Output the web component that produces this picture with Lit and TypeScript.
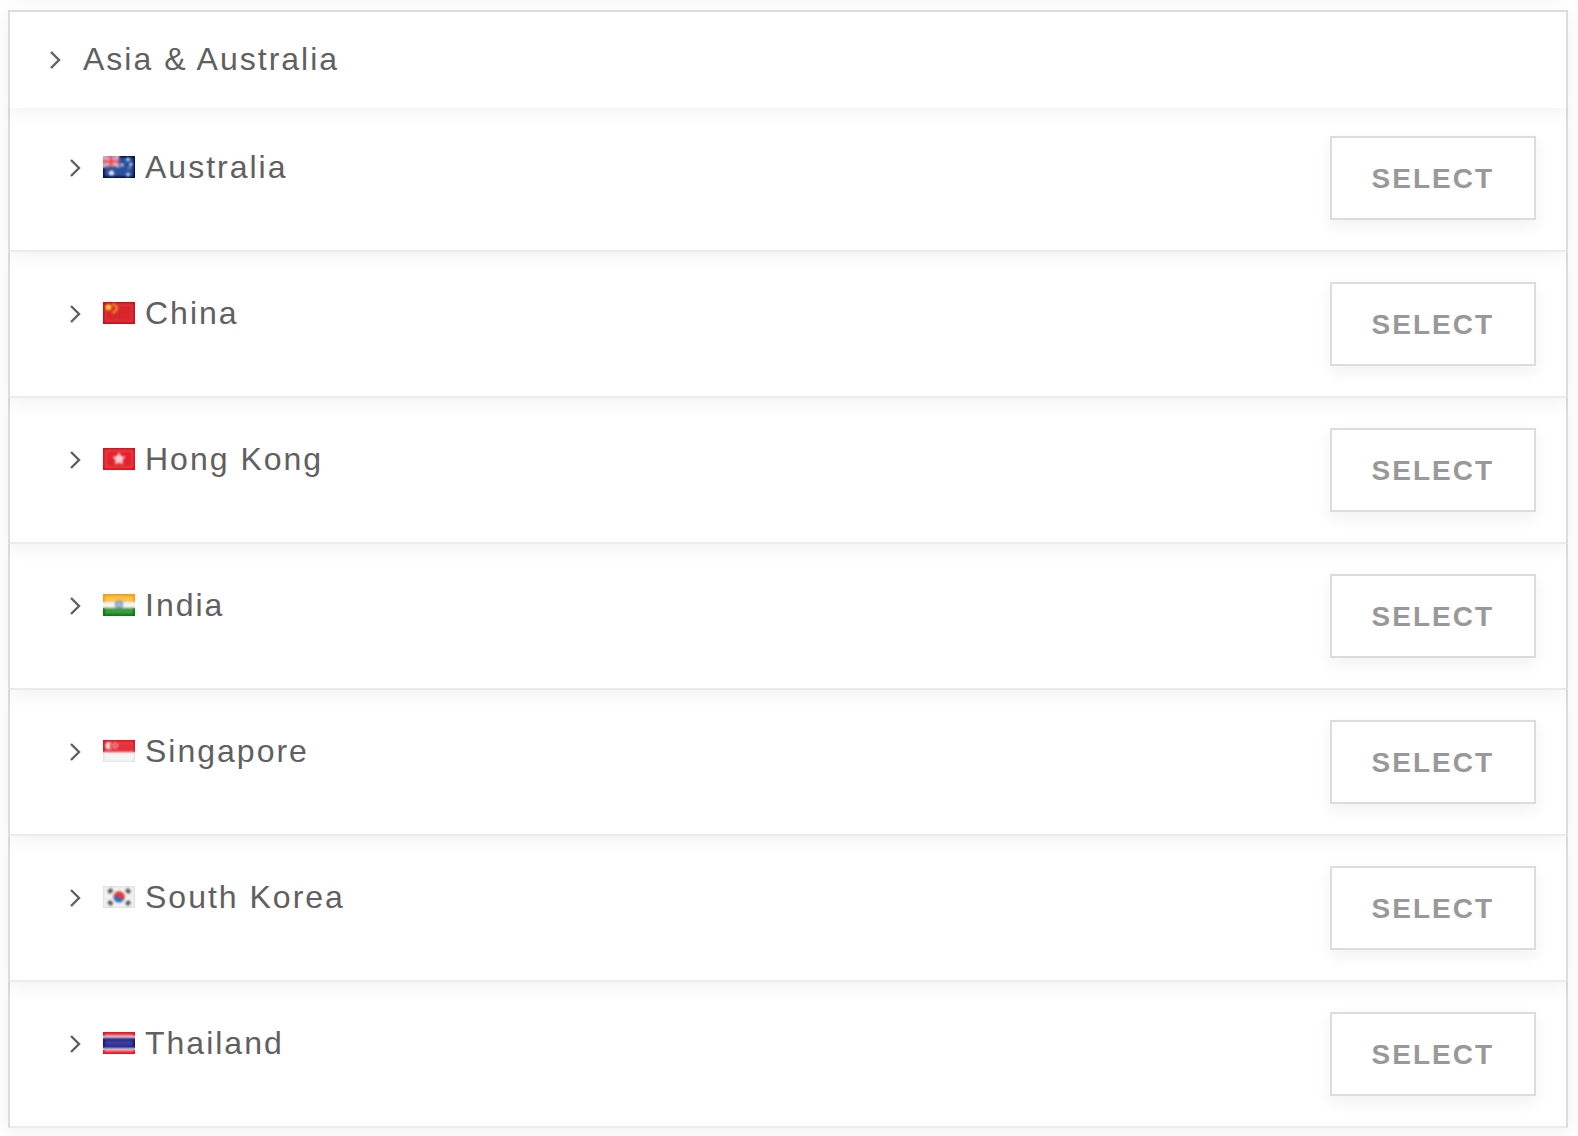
import { LitElement, html, svg, css, type SVGTemplateResult } from "lit";
import { customElement, state } from "lit/decorators.js";
import { styleMap } from "lit/directives/style-map.js";

interface Country {
  name: string;
  flag: SVGTemplateResult;
}

/* Flags are drawn on a 32 x 22 grid. */
const star = (x: number, y: number, r: number, fill: string) => {
  const points = Array.from({ length: 10 }, (_, i) => {
    const a = (Math.PI / 5) * i - Math.PI / 2;
    const d = i % 2 ? r * 0.45 : r;
    return `${(x + d * Math.cos(a)).toFixed(2)},${(y + d * Math.sin(a)).toFixed(2)}`;
  }).join(" ");
  return svg`<polygon points=${points} fill=${fill} />`;
};

const australia = svg`
  <rect width="32" height="22" fill="#03104f" />
  <rect x="2" y="2" width="28" height="18" fill="#3a60a8" />
  <rect x="3" y="3" width="26" height="16" fill="#2a4f9c" />
  <rect width="16" height="11" fill="#6d76b8" />
  <path d="M0 0L16 11M16 0L0 11" stroke="#e9a9b6" stroke-width="3" />
  <path d="M8 0V11M0 5.5H16" stroke="#f6bfc6" stroke-width="4.5" />
  <path d="M8 0V11M0 5.5H16" stroke="#e54852" stroke-width="2.6" />
  <circle cx="8.5" cy="17" r="2.6" fill="#e4edfb" />
  <circle cx="25" cy="3.4" r="1.8" fill="#cfdcf5" />
  <circle cx="19" cy="9" r="1.8" fill="#b9cbed" />
  <circle cx="28" cy="8.5" r="1.7" fill="#c6d5f1" />
  <circle cx="25" cy="18.6" r="1.9" fill="#cfdcf5" />
  <circle cx="26" cy="12" r="1" fill="#9db4e0" />`;

const china = svg`
  <rect width="32" height="22" fill="#c40d14" />
  <rect x="2" y="2" width="28" height="18" fill="#e3555a" />
  <rect x="3" y="3" width="26" height="16" fill="#d8242b" />
  ${star(5.5, 5.4, 4.2, "#ffd92e")}
  <circle cx="5.5" cy="5.4" r="2.4" fill="#ffd92e" />
  <circle cx="11" cy="2.5" r="1.6" fill="#eb9a2d" />
  <circle cx="13.6" cy="5" r="1.6" fill="#eb9a2d" />
  <circle cx="13.2" cy="8" r="1.6" fill="#eb9a2d" />
  <circle cx="10.8" cy="10" r="1.6" fill="#eb9a2d" />`;

const hongKong = svg`
  <rect width="32" height="22" fill="#dc0c17" />
  <rect x="2" y="2" width="28" height="18" fill="#f0626a" />
  <rect x="3" y="3" width="26" height="16" fill="#e3222c" />
  ${star(16, 11, 7, "#fbdcde")}
  <circle cx="16" cy="11" r="3.8" fill="#fbdcde" />
  <circle cx="16" cy="11.4" r="1" fill="#ec7d83" />`;

const india = svg`
  <rect width="32" height="22" fill="#f4f4f4" />
  <rect width="32" height="8" fill="#f59b12" />
  <rect x="2" y="2" width="28" height="6" fill="#fbc44c" />
  <rect y="14" width="32" height="8" fill="#0c7613" />
  <rect x="2" y="14" width="28" height="6" fill="#3f9a3f" />
  <circle cx="16" cy="10.6" r="3.4" fill="#a8b6d2" stroke="#7f94c0" stroke-width="1.4" />`;

const singapore = svg`
  <rect width="32" height="22" fill="#dedede" />
  <rect x="1" y="11" width="30" height="10" fill="#f5f5f5" />
  <rect width="32" height="12" fill="#dc1620" />
  <rect x="2" y="2" width="28" height="10" fill="#ee5860" />
  <rect x="3" y="3" width="26" height="9" fill="#e3303a" />
  <path d="M7.5 2.8A3.3 3.3 0 1 0 7.5 8.8A4.4 4.4 0 0 1 7.5 2.8Z" fill="#fff" stroke="#f9d5d7" />
  <circle cx="12" cy="3" r="1" fill="#fbd0d3" />
  <circle cx="9.8" cy="5" r="1" fill="#fbd0d3" />
  <circle cx="14.2" cy="5" r="1" fill="#fbd0d3" />
  <circle cx="10.6" cy="7.4" r="1" fill="#fbd0d3" />
  <circle cx="13.4" cy="7.4" r="1" fill="#fbd0d3" />`;

const southKorea = svg`
  <rect width="32" height="22" fill="#dcdcdc" />
  <rect x="1" y="1" width="30" height="20" fill="#f3f3f3" />
  <circle cx="16" cy="11" r="5.6" fill="#2c6fd0" />
  <path d="M10.8 9A5.6 5.6 0 0 1 21.4 12.6C19.6 14 17.6 13.2 16 11.2C14.4 9.4 12 10.2 10.8 12.4Z" fill="#e83a37" />
  <path d="M5.6 6.6L9 3.4M23.4 3.4L26.8 6.6M5.6 15.4L9 18.6M23.4 18.6L26.8 15.4" stroke="#4e4e4e" stroke-width="4" />`;

const thailand = svg`
  <rect width="32" height="22" fill="#e8141f" />
  <rect x="2" y="2" width="28" height="18" fill="#f2646c" />
  <rect y="4" width="32" height="14" fill="#e9e9f2" />
  <rect y="6" width="32" height="10" fill="#16167a" />
  <rect x="2" y="8" width="28" height="6" fill="#3b3c9c" />`;

const COUNTRIES: Country[] = [
  { name: "Australia", flag: australia },
  { name: "China", flag: china },
  { name: "Hong Kong", flag: hongKong },
  { name: "India", flag: india },
  { name: "Singapore", flag: singapore },
  { name: "South Korea", flag: southKorea },
  { name: "Thailand", flag: thailand },
];

const chevron = html`<svg class="chevron" viewBox="0 0 13 22" aria-hidden="true">
  <path d="M2 4L10 12L2 20" />
</svg>`;

@customElement("app-root")
export class AppRoot extends LitElement {
  @state() private selected = "";

  static styles = css`
    :host {
      display: block;
      background: #fff;
      color: #606060;
      font-family: "Liberation Sans", Arial, sans-serif;
      font-size: 32px;
      line-height: 42px;
      letter-spacing: 2px;
    }
    .page {
      padding: 0 10px 8px 8px;
      overflow: hidden;
    }
    .previous {
      height: 10px;
      margin-top: -10px;
      margin-bottom: 10px;
      box-shadow: 0 0 12px rgba(0, 0, 0, 0.04);
    }
    .region,
    .row {
      position: relative;
      box-sizing: border-box;
      background: #fff;
      border: 2px solid #dcdcdc;
      box-shadow: 0 4px 18px rgba(0, 0, 0, 0.06);
    }
    .region {
      z-index: 1;
      border-bottom: 0;
      padding: 26px 30px 28px 39px;
    }
    .list {
      position: relative;
      margin: -2px 0 0;
      padding: 0;
      list-style: none;
    }
    /* Each row carries a z-index so its shadow falls on the row below only. */
    .row {
      display: flex;
      align-items: flex-start;
      justify-content: space-between;
      border-top: 0;
      border-bottom-color: #ebebeb;
      padding: 30px 30px 30px 59px;
    }
    .list {
      z-index: 0;
    }
    .toggle {
      display: flex;
      align-items: center;
      border: 0;
      padding: 0;
      background: none;
      color: inherit;
      font: inherit;
      letter-spacing: inherit;
      cursor: pointer;
    }
    .row .toggle {
      margin-top: 10px;
    }
    .chevron {
      width: 13px;
      height: 22px;
      margin-right: 21px;
      fill: none;
      stroke: #606060;
      stroke-width: 2.4;
    }
    .flag {
      width: 32px;
      height: 22px;
      margin-right: 10px;
      overflow: hidden;
    }
    .soft {
      filter: blur(0.8px);
    }
    .select {
      border: 2px solid #dcdcdc;
      padding: 20px 40px 18px;
      background: #fff;
      color: #999;
      box-shadow: 0 6px 16px rgba(0, 0, 0, 0.06);
      font: inherit;
      font-size: 28px;
      font-weight: bold;
      letter-spacing: 2px;
      text-transform: uppercase;
      cursor: pointer;
    }
  `;

  render() {
    return html`
      <main class="page">
        <div class="previous"></div>
        <div class="region">
          <button class="toggle" aria-expanded="true">${chevron}Asia &amp; Australia</button>
        </div>
        <ul class="list">
          ${COUNTRIES.map(
            (c, i) => html`<li class="row" style=${styleMap({ zIndex: String(COUNTRIES.length - i) })}>
              <button class="toggle" aria-expanded="false">
                ${chevron}<svg class="flag" viewBox="0 0 32 22" aria-hidden="true">
                  ${c.flag}
                  <g class="soft">${c.flag}</g></svg
                >${c.name}
              </button>
              <button
                class="select"
                aria-pressed=${this.selected === c.name}
                @click=${() => (this.selected = c.name)}
              >
                Select
              </button>
            </li>`,
          )}
        </ul>
      </main>
    `;
  }
}
